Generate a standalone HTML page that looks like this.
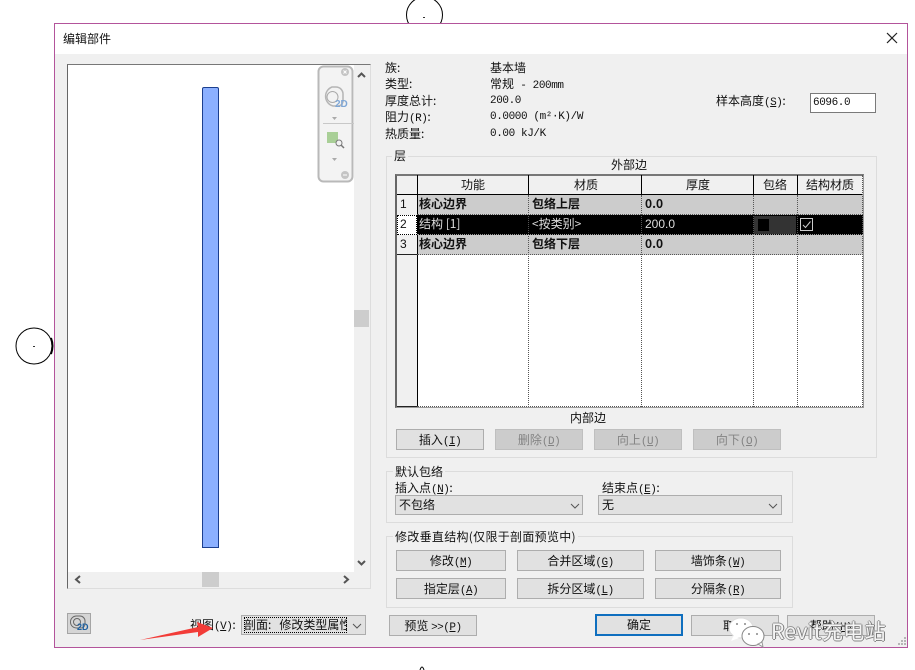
<!DOCTYPE html>
<html><head><meta charset="utf-8">
<style>
html,body{margin:0;padding:0;width:915px;height:670px;overflow:hidden;background:#fff}
body{position:relative;font-family:"WenQuanYi Zen Hei","Noto Sans CJK SC",sans-serif;font-size:12px;color:#111}
.a{position:absolute;white-space:nowrap;line-height:14px}
.m{font-family:"Liberation Mono","WenQuanYi Zen Hei",monospace;letter-spacing:-.4px}
.l{font-family:"Liberation Mono",monospace;font-size:11px;letter-spacing:-.5px}
.box{position:absolute;box-sizing:border-box}
.btn{position:absolute;box-sizing:border-box;background:#e1e1e1;border:1px solid #adadad;text-align:center;line-height:19px;height:21px;white-space:nowrap}
.dis{background:#cccccc;border-color:#bfbfbf;color:#838383}
.grp{position:absolute;box-sizing:border-box;border:1px solid #dcdcdc}
.lg{position:absolute;background:#f0f0f0;padding:0 2px;line-height:14px;white-space:nowrap}
.combo{position:absolute;box-sizing:border-box;background:#e1e1e1;border:1px solid #adadad;height:20px;line-height:18px;padding-left:3px;white-space:nowrap}
.v{position:absolute;top:0;width:0;border-left:1px dotted #555}
.vh{position:absolute;top:175px;height:20px;width:1px;background:#000}
.row{position:absolute;left:417px;width:446px;height:20px;box-sizing:border-box;border-bottom:1px dotted #555}
.t{position:absolute;line-height:20px;white-space:nowrap}
.b{font-weight:bold;font-family:"Noto Sans CJK SC","Liberation Sans",sans-serif}
</style></head><body>
<!-- backdrop circles -->
<svg class="box" style="left:0;top:0" width="915" height="670">
<circle cx="424.500" cy="15" r="18" fill="#fff" stroke="#000"/>
<circle cx="34" cy="346" r="18" fill="#fff" stroke="#000"/>
<path d="M51 338q3 8 0 16" fill="none" stroke="#000" stroke-width="2"/>
<rect x="33" y="346" width="2" height="1" fill="#333"/><rect x="423" y="17" width="2" height="1" fill="#333"/>
<path d="M420 670q1-3 2-3t2 3" fill="none" stroke="#000"/>
</svg>
<!-- dialog -->
<div class="box" style="left:54px;top:23px;width:854px;height:625px;background:#f0f0f0;border:1px solid #b3549b"></div>
<div class="box" style="left:55px;top:24px;width:852px;height:30px;background:#fff"></div>
<div class="a" style="left:63px;top:32px">编辑部件</div>
<svg class="box" style="left:886px;top:32px" width="12" height="12"><path d="M1 1l10 10M11 1L1 11" stroke="#222" stroke-width="1.200"/></svg>

<!-- preview -->
<div class="box" style="left:67px;top:64px;width:304px;height:525px;background:#f0f0f0;border-top:1px solid #777;border-left:1px solid #666;border-right:1px solid #ddd;border-bottom:1px solid #ddd"></div>
<div class="box" style="left:68px;top:65px;width:286px;height:507px;background:#fff"></div>
<div class="box" style="left:202px;top:87px;width:17px;height:461px;background:#8cb0ff;border:1px solid #1c3f8f;border-radius:2px 2px 0 0"></div>
<div class="box" style="left:354px;top:310px;width:15px;height:17px;background:#cdcdcd"></div>
<div class="box" style="left:202px;top:572px;width:17px;height:15px;background:#cdcdcd"></div>
<svg class="box" style="left:0;top:0" width="400" height="600" fill="none">
<path d="M358 77l3.500-3.500 3.500 3.500M358 561l3.500 3.500 3.500-3.500M80 576l-4 3.500 4 3.500M344 576l4 3.500-4 3.500" stroke="#555" stroke-width="2"/>
<rect x="318.500" y="66.500" width="34" height="115" rx="5" fill="#f3f3f3" stroke="#b9b9b9" stroke-width="2"/>
<circle cx="345" cy="72" r="4" fill="#c4c4c4"/><path d="M343.500 70.500l3 3m0-3l-3 3" stroke="#fff"/>
<circle cx="345" cy="175" r="4" fill="#c4c4c4"/><path d="M343 175h4" stroke="#fff"/>
<path d="M332 87h4a7 7 0 0 1 7 7v7a5 5 0 0 1-5 5h-5a10 10 0 0 1-1-19z" stroke="#b5b5b5" stroke-width="1.500"/>
<circle cx="332.500" cy="97" r="5.500" stroke="#aaa"/>
<path d="M332 117l5 0-2.500 3z" fill="#aaa"/><path d="M323 123.500h31" stroke="#c8c8c8"/>
<rect x="327" y="132" width="11" height="11" fill="#a9cf97"/><circle cx="339" cy="143" r="3" fill="#f3f3f3" stroke="#777"/><path d="M341 145l3 3" stroke="#777" stroke-width="1.500"/>
<path d="M332 158l5 0-2.500 3z" fill="#aaa"/>
</svg>
<div class="a" style="left:335px;top:99px;font:bold 10px/12px 'Liberation Sans',sans-serif;color:#7fa7d6">2D</div>

<!-- header info -->
<div class="a" style="left:385px;top:61px">族:</div>
<div class="a" style="left:385px;top:77px">类型:</div>
<div class="a" style="left:385px;top:94px">厚度总计:</div>
<div class="a" style="left:385px;top:110px">阻力<span class="l">(R)</span>:</div>
<div class="a" style="left:385px;top:127px">热质量:</div>
<div class="a" style="left:490px;top:61px">基本墙</div>
<div class="a m" style="left:490px;top:78px;font-size:11px"><span style="font-size:12px;letter-spacing:0">常规</span> - 200mm</div>
<div class="a m" style="left:490px;top:94px;font-size:11px">200.0</div>
<div class="a m" style="left:490px;top:110px;font-size:11px">0.0000 (m²·K)/W</div>
<div class="a m" style="left:490px;top:127px;font-size:11px">0.00 kJ/K</div>
<div class="a" style="left:716px;top:94px">样本高度<span class="l">(<u>S</u>)</span>:</div>
<div class="box m" style="left:810px;top:93px;width:66px;height:20px;background:#fff;border:1px solid #7a7a7a;line-height:18px;padding-left:2px;font-size:11px">6096.0</div>

<!-- layers group -->
<div class="grp" style="left:386px;top:156px;width:491px;height:302px"></div>
<div class="lg" style="left:392px;top:149px">层</div>
<div class="a" style="left:611px;top:158px">外部边</div>
<div class="box" style="left:395px;top:174px;width:469px;height:234px;background:#fff;border:1px solid #999;border-top:2px solid #777;border-left:2px solid #666"></div>
<div class="box" style="left:397px;top:176px;width:466px;height:19px;background:#f0f0f0;border-bottom:1px solid #000"></div>
<div class="box" style="left:417px;top:195px;width:446px;height:20px;background:#cccccc"></div>
<div class="box" style="left:417px;top:215px;width:446px;height:20px;background:#000"></div>
<div class="box" style="left:417px;top:235px;width:446px;height:20px;background:#cccccc"></div>
<div class="box" style="left:397px;top:195px;width:20px;height:20px;background:#f0f0f0"></div>
<div class="box" style="left:397px;top:215px;width:20px;height:20px;background:#fff;border:1px dotted #000"></div>
<div class="box" style="left:397px;top:235px;width:20px;height:20px;background:#f0f0f0"></div>
<div class="box" style="left:397px;top:254px;width:20px;height:153px;background:#f0f0f0;border-top:1px solid #222;border-bottom:1px solid #222"></div>
<div class="box" style="left:417px;top:175px;width:1px;height:232px;background:#000"></div>
<div class="vh" style="left:528px"></div><div class="vh" style="left:641px"></div><div class="vh" style="left:753px"></div><div class="vh" style="left:797px"></div>
<div class="v" style="left:528px;top:195px;height:212px"></div><div class="v" style="left:641px;top:195px;height:212px"></div><div class="v" style="left:753px;top:195px;height:212px"></div><div class="v" style="left:797px;top:195px;height:212px"></div><div class="v" style="left:862px;top:175px;height:232px"></div>
<div class="row" style="top:195px"></div><div class="row" style="top:215px;border-color:#999"></div><div class="row" style="top:235px"></div>
<div class="box" style="left:417px;top:406px;width:446px;height:1px;border-bottom:1px dotted #555"></div>
<div class="t" style="left:461px;top:175px">功能</div><div class="t" style="left:574px;top:175px">材质</div><div class="t" style="left:686px;top:175px">厚度</div><div class="t" style="left:763px;top:175px">包络</div><div class="t" style="left:806px;top:175px">结构材质</div>
<div class="t" style="left:400px;top:194px;font-family:'Liberation Sans'">1</div><div class="t" style="left:400px;top:214px;font-family:'Liberation Sans'">2</div><div class="t" style="left:400px;top:234px;font-family:'Liberation Sans'">3</div>
<div class="t b" style="left:419px;top:194px">核心边界</div><div class="t b" style="left:532px;top:194px">包络上层</div><div class="t b" style="left:645px;top:194px">0.0</div>
<div class="t" style="left:419px;top:214px;color:#ddd">结构 [1]</div><div class="t" style="left:532px;top:214px;color:#ddd">&lt;按类别&gt;</div><div class="t" style="left:645px;top:214px;color:#ddd;font-family:'Liberation Sans'">200.0</div>
<div class="box" style="left:754px;top:216px;width:42px;height:18px;background:#333"></div>
<div class="box" style="left:758px;top:219px;width:11px;height:12px;background:#000"></div>
<svg class="box" style="left:800px;top:218px" width="14" height="14" fill="none"><rect x=".5" y=".5" width="12" height="12" stroke="#ccc"/><path d="M3 7l2.500 2.500 5-6" stroke="#ccc"/></svg>
<div class="t b" style="left:419px;top:234px">核心边界</div><div class="t b" style="left:532px;top:234px">包络下层</div><div class="t b" style="left:645px;top:234px">0.0</div>
<div class="a" style="left:570px;top:411px">内部边</div>
<div class="btn" style="left:396px;top:429px;width:88px">插入<span class="l">(<u>I</u>)</span></div>
<div class="btn dis" style="left:495px;top:429px;width:88px">删除<span class="l">(<u>D</u>)</span></div>
<div class="btn dis" style="left:594px;top:429px;width:88px">向上<span class="l">(<u>U</u>)</span></div>
<div class="btn dis" style="left:693px;top:429px;width:88px">向下<span class="l">(<u>O</u>)</span></div>

<!-- default wrap -->
<div class="grp" style="left:386px;top:471px;width:407px;height:52px"></div>
<div class="lg" style="left:393px;top:465px">默认包络</div>
<div class="a" style="left:395px;top:481px">插入点<span class="l">(<u>N</u>)</span>:</div>
<div class="a" style="left:602px;top:481px">结束点<span class="l">(<u>E</u>)</span>:</div>
<div class="combo" style="left:395px;top:495px;width:188px">不包络</div>
<div class="combo" style="left:598px;top:495px;width:184px">无</div>
<svg class="box" style="left:0;top:0;pointer-events:none" width="915" height="670" fill="none"><path d="M571 504l4 4 4-4M769 504l4 4 4-4" stroke="#555"/></svg>

<!-- modify -->
<div class="grp" style="left:386px;top:536px;width:407px;height:72px"></div>
<div class="lg" style="left:393px;top:530px;letter-spacing:.3px">修改垂直结构(仅限于剖面预览中)</div>
<div class="btn" style="left:396px;top:550px;width:110px">修改<span class="l">(<u>M</u>)</span></div>
<div class="btn" style="left:517px;top:550px;width:127px">合并区域<span class="l">(<u>G</u>)</span></div>
<div class="btn" style="left:655px;top:550px;width:126px">墙饰条<span class="l">(<u>W</u>)</span></div>
<div class="btn" style="left:396px;top:578px;width:110px">指定层<span class="l">(<u>A</u>)</span></div>
<div class="btn" style="left:517px;top:578px;width:127px">拆分区域<span class="l">(<u>L</u>)</span></div>
<div class="btn" style="left:655px;top:578px;width:126px">分隔条<span class="l">(<u>R</u>)</span></div>

<!-- bottom row -->
<div class="box" style="left:67px;top:613px;width:24px;height:21px;background:#d5d5d5;border:1px solid #a5a5a5"></div>
<svg class="box" style="left:67px;top:613px" width="24" height="21" fill="none"><path d="M9 3h4a5 5 0 0 1 5 5v3a4 4 0 0 1-4 4H10a6 6 0 0 1-1-12z" stroke="#666"/><circle cx="10" cy="9" r="3.500" stroke="#666"/></svg>
<div class="a" style="left:77px;top:621px;font:bold 9px/12px 'Liberation Sans',sans-serif;color:#1d5f9f">2D</div>
<div class="a" style="left:190px;top:618px">视图<span class="l">(<u>V</u>)</span>:</div>
<div class="combo" style="left:241px;top:615px;width:125px;overflow:hidden;padding-left:2px"><span style="outline:1px dotted #000;outline-offset:-1px;display:inline-block;line-height:16px;width:103px;overflow:hidden;vertical-align:top;margin-top:1px">剖面:<span style="display:inline-block;width:8px"></span>修改类型属性</span></div>
<svg class="box" style="left:0;top:0" width="915" height="670" fill="none"><path d="M353 624l4 4 4-4" stroke="#555"/><path d="M140 640L198 627L197 622L213 628L198 637L198 632z" fill="#f23c38"/></svg>
<div class="btn" style="left:389px;top:615px;width:88px">预览 <span class="l">&gt;&gt;(<u>P</u>)</span></div>
<div class="btn" style="left:595px;top:614px;width:88px;height:22px;border:2px solid #0f6fbf;line-height:18px">确定</div>
<div class="btn" style="left:691px;top:615px;width:88px">取消</div>
<div class="btn" style="left:787px;top:615px;width:88px">帮助<span class="l">(<u>H</u>)</span></div>

<!-- watermark -->
<svg class="box" style="left:728px;top:609px" width="60" height="45">
<ellipse cx="13" cy="19" rx="12" ry="10" fill="#fff" stroke="#ddd"/>
<path d="M6 26l-3 6 8-3z" fill="#fff"/>
<ellipse cx="25" cy="27" rx="11" ry="9.500" fill="#fff" stroke="#888"/>
<path d="M30 35l5 3-1-5z" fill="#fff" stroke="#999"/>
<circle cx="21" cy="25" r="1" fill="#888"/><circle cx="29" cy="25" r="1" fill="#888"/>
<circle cx="9" cy="15" r="1" fill="#888"/><circle cx="17" cy="15" r="1" fill="#888"/>
</svg>
<div class="a" style="left:771px;top:619px;font:21px/24px 'WenQuanYi Zen Hei','Noto Sans CJK SC',sans-serif;letter-spacing:.3px;color:#f4f4f4;text-shadow:1px 0 0 #777,-1px 0 0 #999,0 1px 0 #888,0 -1px 0 #999">Revit充电站</div>
<svg class="box" style="left:896px;top:636px" width="11" height="11"><g fill="#b5b5b5"><rect x="8" y="1" width="2" height="2"/><rect x="5" y="4" width="2" height="2"/><rect x="8" y="4" width="2" height="2"/><rect x="2" y="7" width="2" height="2"/><rect x="5" y="7" width="2" height="2"/><rect x="8" y="7" width="2" height="2"/></g></svg>
</body></html>
